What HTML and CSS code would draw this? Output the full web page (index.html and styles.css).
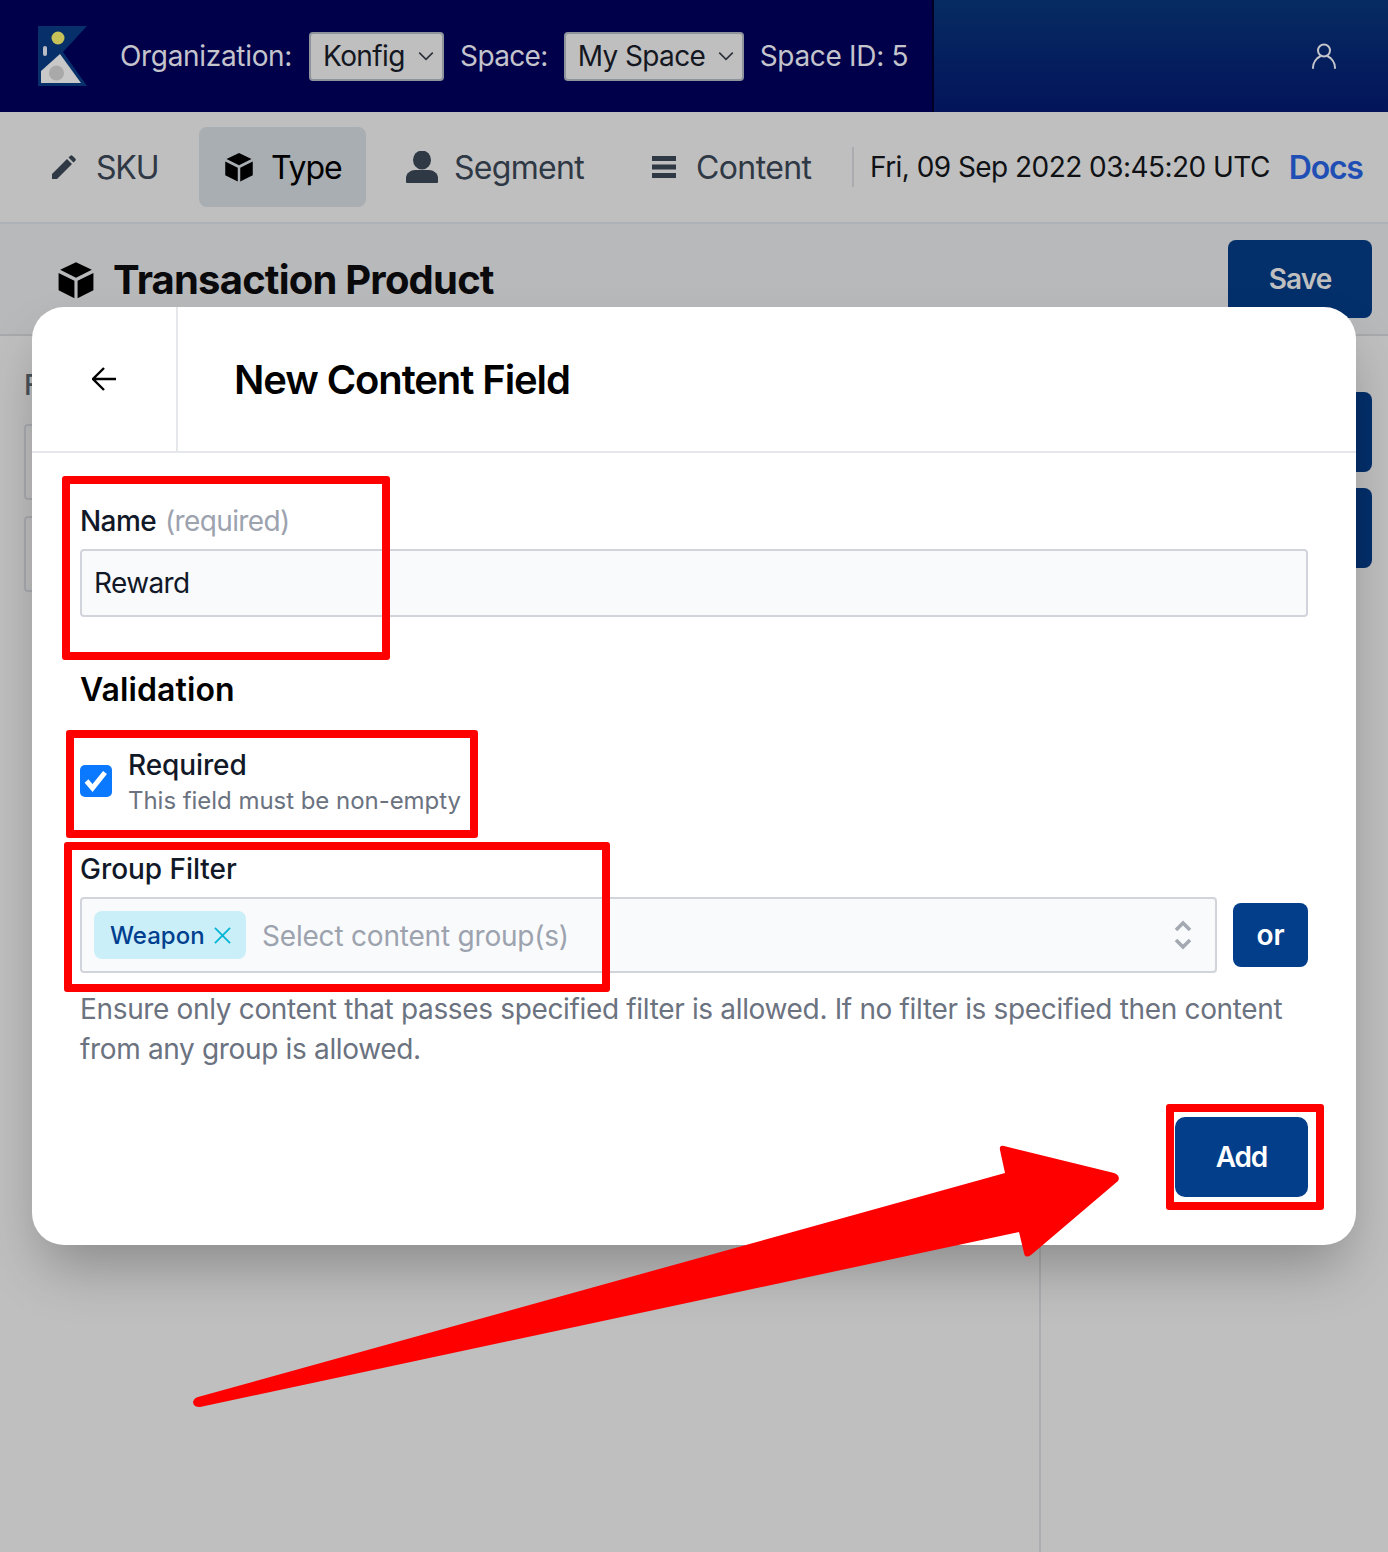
FILE: index.html
```html
<!DOCTYPE html>
<html lang="en">
<head>
<meta charset="utf-8">
<title>New Content Field</title>
<link rel="stylesheet" href="styles.css">
</head>
<body>
<div class="page">
  <header class="topbar">
    <div class="topbar-left">
      <svg class="logo" viewBox="0 0 50 60" aria-hidden="true">
        <polygon points="0,0 49,0 25,26 49,60 0,60" fill="#07306b"/>
        <circle cx="20" cy="12" r="6.5" fill="#c6c158"/>
        <rect x="5" y="20" width="4" height="10" rx="2" fill="#b9bcc4"/>
        <polygon points="22,28 43,57 3,57 3,45" fill="#c8c8c8"/>
        <circle cx="18.500" cy="47" r="7.500" fill="#a9a9a9"/>
      </svg>
      <span class="top-label org-label">Organization:</span>
      <div class="top-select org-select"><span>Konfig</span><svg class="caret" viewBox="0 0 16 16"><path d="M2 5l6 6 6-6"/></svg></div>
      <span class="top-label space-label">Space:</span>
      <div class="top-select space-select"><span>My Space</span><svg class="caret" viewBox="0 0 16 16"><path d="M2 5l6 6 6-6"/></svg></div>
      <span class="top-label">Space ID: 5</span>
    </div>
    <div class="topbar-right">
      <svg class="user-icon" viewBox="0 0 24 26"><circle cx="12" cy="7.500" r="6"/><path d="M1 25c0-6 4-10 7-11.500M23 25c0-6-4-10-7-11.500"/></svg>
    </div>
  </header>

  <nav class="nav">
    <a class="nav-item nav-sku">
      <svg class="nav-icon" viewBox="0 0 24 24"><path d="M0 24v-5L15 4l5 5L5 24zM16.500 2.500l1.800-1.800a1.500 1.500 0 0 1 2.100 0l2.900 2.900a1.500 1.500 0 0 1 0 2.100L21.500 7.500z"/></svg>
      <span>SKU</span>
    </a>
    <a class="nav-item nav-active">
      <svg class="nav-icon cube" viewBox="0 0 24 24"><path d="M12 .8l10 4.700-10 5-10-5zM1 7.500l10 5V23.500L1 18.500zM23 7.500l-10 5V23.500l10-5z"/></svg>
      <span>Type</span>
    </a>
    <a class="nav-item nav-segment">
      <svg class="nav-icon person" viewBox="0 0 32 32"><ellipse cx="16" cy="9" rx="9" ry="9.500"/><path d="M0 31v-4c0-5 5-8 9-8h14c4 0 9 3 9 8v4a1 1 0 0 1-1 1H1a1 1 0 0 1-1-1z"/></svg>
      <span>Segment</span>
    </a>
    <a class="nav-item nav-content">
      <svg class="nav-icon bars" viewBox="0 0 24 22"><path d="M0 0h24v5H0zM0 8.500h24v5H0zM0 17h24v5H0z"/></svg>
      <span>Content</span>
    </a>
    <span class="nav-divider"></span>
    <span class="nav-date">Fri, 09 Sep 2022 03:45:20 UTC</span>
    <a class="nav-docs">Docs</a>
  </nav>

  <section class="titlebar">
    <svg class="title-icon" viewBox="0 0 24 24"><path d="M12 .8l10 4.700-10 5-10-5zM1 7.500l10 5V23.500L1 18.500zM23 7.500l-10 5V23.500l10-5z"/></svg>
    <h1 class="page-title">Transaction Product</h1>
    <button class="btn-save">Save</button>
  </section>

  <main class="content">
    <div class="pane-left">
      <div class="pane-label">Fields</div>
      <div class="ghost-row"></div>
      <div class="ghost-row"></div>
    </div>
    <div class="pane-right">
      <div class="ghost-btn"></div>
      <div class="ghost-btn"></div>
    </div>
  </main>

  <div class="modal">
    <div class="modal-head">
      <div class="modal-back">
        <svg class="back-icon" viewBox="0 0 24 24"><path d="M12 1L1 12l11 11M1 12h23"/></svg>
      </div>
      <h2 class="modal-title">New Content Field</h2>
    </div>
    <div class="modal-body">
      <label class="field-label name-label">Name <span class="muted">(required)</span></label>
      <div class="input">Reward</div>

      <h3 class="section-title">Validation</h3>

      <div class="check-row">
        <span class="checkbox"><svg viewBox="0 0 32 32"><path d="M6.500 16l6 7L25 7.500"/></svg></span>
        <div>
          <div class="check-title">Required</div>
          <div class="check-desc">This field must be non-empty</div>
        </div>
      </div>

      <label class="field-label group-label">Group Filter</label>
      <div class="select-row">
        <div class="multiselect">
          <span class="tag">Weapon<svg class="tag-x" viewBox="0 0 18 18"><path d="M1 1l16 16M17 1L1 17"/></svg></span>
          <span class="placeholder">Select content group(s)</span>
          <svg class="updown" viewBox="0 0 18 32"><path d="M2 11l7-7 7 7M2 21l7 7 7-7"/></svg>
        </div>
        <button class="btn-or">or</button>
      </div>
      <p class="help">Ensure only content that passes specified filter is allowed. If no filter is specified then content from any group is allowed.</p>
      <div class="modal-actions">
        <button class="btn-add">Add</button>
      </div>
    </div>
  </div>

  <div class="mark mark-name"></div>
  <div class="mark mark-required"></div>
  <div class="mark mark-group"></div>
  <div class="mark mark-add"></div>
  <svg class="arrow" viewBox="0 0 1388 1552" aria-hidden="true">
    <path d="M198 1397L1005 1173L1000 1150Q999 1145 1004 1146L1114 1173Q1121 1176 1118 1181L1031 1255Q1025 1259 1024 1253L1019 1232L200 1407Q193 1407 193 1402Q194 1398 198 1397Z"/>
  </svg>
</div>
</body>
</html>
```
FILE: styles.css
```css
* { box-sizing: border-box; }
html, body { margin: 0; padding: 0; }
body { font-family: Inter, "Liberation Sans", sans-serif; background: #bfbfbf; color: #000; }
.page { position: relative; width: 1388px; height: 1552px; overflow: hidden; display: flex; flex-direction: column; background: #bfbfbf; }

.topbar { display: flex; height: 112px; flex: none; background: #00004a; }
.topbar-left { width: 934px; display: flex; align-items: center; padding-left: 38px; border-right: 2px solid #000024; flex: none; }
.logo { width: 50px; height: 60px; margin-right: 32px; margin-top: -1px; flex: none; }
.top-label { font-size: 28px; letter-spacing: -0.32px; color: #c4c4cc; white-space: nowrap; }
.space-label { letter-spacing: -0.65px; }
.top-select { display: flex; align-items: center; justify-content: space-between; height: 49px; margin: 0 16px; padding: 0 7px 0 12px; background: #bfbfbf; border: 2px solid #8f949c; border-radius: 4px; color: #14171f; font-size: 28px; letter-spacing: -0.6px; }
.org-select { width: 135px; margin-left: 17px; }
.space-select { width: 180px; }
.caret { width: 18px; height: 18px; fill: none; stroke: #2b2f38; stroke-width: 1.400; }
.topbar-right { flex: 1; display: flex; align-items: center; justify-content: flex-end; padding-right: 52px; background: linear-gradient(180deg, #062b62 0%, #03145a 100%); }
.user-icon { width: 24px; height: 26px; fill: none; stroke: #c4c6cc; stroke-width: 2; stroke-linecap: round; }

.nav { display: flex; align-items: center; height: 112px; flex: none; padding-left: 16px; border-bottom: 2px solid #aeb1b5; }
.nav-item { display: flex; align-items: center; height: 80px; font-size: 32px; letter-spacing: -0.6px; color: #2f3845; }
.nav-sku { width: 183px; padding-left: 36px; gap: 20px; letter-spacing: -1.2px; }
.nav-active { width: 167px; padding-left: 25px; gap: 17px; background: #a9aeb2; border-radius: 8px; color: #000; letter-spacing: -1.1px; }
.nav-segment { width: 240px; padding-left: 40px; gap: 16px; letter-spacing: -0.7px; }
.nav-content { width: 246px; padding-left: 46px; gap: 20px; }
.nav-icon { width: 24px; height: 24px; fill: #2f3845; flex: none; }
.cube { width: 30px; height: 30px; fill: #000; }
.person { width: 32px; height: 32px; }
.bars { width: 24px; height: 22px; }
.nav-divider { width: 2px; height: 40px; background: #a9abae; flex: none; }
.nav-date { font-size: 28px; letter-spacing: -0.55px; color: #0f1115; margin-left: 16px; white-space: nowrap; }
.nav-docs { font-size: 32px; font-weight: 600; letter-spacing: -1.25px; color: #1f4fb5; margin-left: 19px; }

.titlebar { display: flex; align-items: center; height: 112px; flex: none; padding: 0 16px 0 57px; background: #b8b9bb; border-bottom: 2px solid #a8a9ac; }
.title-icon { width: 38px; height: 38px; fill: #000; flex: none; margin-right: 18px; margin-top: 2px; }
.page-title { margin: 2px 0 0; font-size: 40px; line-height: 48px; font-weight: 700; letter-spacing: -0.8px; color: #0a0a0c; white-space: nowrap; flex: 1; }
.btn-save { width: 144px; height: 78px; border: 0; border-radius: 8px; background: #032f6b; color: #bfbfbf; font: 600 28px Inter, sans-serif; letter-spacing: -0.9px; }

.content { flex: 1; display: flex; }
.pane-left { width: 1039px; padding: 32px 24px 0; flex: none; }
.pane-label { font-size: 28px; line-height: 34px; font-weight: 500; color: #4a5058; margin-bottom: 22px; }
.ghost-row { height: 76px; border: 2px solid #a9abb0; border-radius: 4px; margin-bottom: 16px; }
.pane-right { flex: 1; padding: 56px 16px 0; border-left: 2px solid #abadb0; }
.ghost-btn { height: 80px; background: #032f6b; border-radius: 8px; margin-bottom: 16px; }

.modal { position: absolute; left: 32px; top: 307px; width: 1324px; height: 938px; background: #fff; border-radius: 32px; box-shadow: 0 30px 56px -10px rgba(0, 0, 0, 0.28); }
.modal-head { display: flex; height: 146px; border-bottom: 2px solid #e5e7eb; }
.modal-back { width: 146px; display: flex; align-items: center; justify-content: center; border-right: 2px solid #e5e7eb; }
.back-icon { width: 24px; height: 24px; fill: none; stroke: #000; stroke-width: 2.400; }
.modal-title { margin: 0 0 0 56px; font-size: 40px; line-height: 146px; font-weight: 600; letter-spacing: -1.1px; color: #000; }
.modal-body { padding: 48px; }
.field-label { display: block; height: 40px; font-size: 28px; line-height: 40px; font-weight: 500; letter-spacing: -0.05px; color: #111827; }
.name-label { letter-spacing: -0.6px; }
.muted { font-weight: 400; color: #9ca3af; margin-left: 2px; }
.input { height: 68px; margin-top: 8px; padding: 0 12px; display: flex; align-items: center; background: #f9fafb; border: 2px solid #d1d5db; border-radius: 4px; font-size: 28px; letter-spacing: -0.65px; color: #111827; }
.section-title { margin: 52px 0 0; height: 40px; padding-top: 1px; font-size: 32px; line-height: 40px; font-weight: 600; letter-spacing: 0.1px; color: #000; }
.check-row { display: flex; align-items: center; gap: 16px; margin-top: 36px; }
.checkbox { width: 32px; height: 32px; border-radius: 5px; background: #0a78ff; display: block; flex: none; }
.checkbox svg { display: block; width: 32px; height: 32px; fill: none; stroke: #fff; stroke-width: 5; }
.check-title { font-size: 28px; line-height: 40px; font-weight: 500; letter-spacing: -0.1px; color: #111827; }
.check-desc { font-size: 24px; line-height: 32px; letter-spacing: -0.04px; color: #6b7280; }
.group-label { margin-top: 32px; }
.select-row { display: flex; align-items: center; gap: 16px; margin-top: 8px; }
.multiselect { flex: 1; height: 76px; display: flex; align-items: center; padding: 0 23px 0 12px; background: #f9fafb; border: 2px solid #d1d5db; border-radius: 4px; }
.tag { display: flex; align-items: center; gap: 9px; width: 152px; height: 48px; padding: 1px 14px 0 16px; background: #cbeff8; border-radius: 8px; font-size: 24px; font-weight: 500; color: #003f8f; }
.tag-x { width: 17px; height: 17px; fill: none; stroke: #06b6d4; stroke-width: 2; }
.placeholder { flex: 1; margin-left: 16px; padding-top: 1px; font-size: 28px; letter-spacing: -0.2px; color: #9ca3af; }
.updown { width: 18px; height: 32px; fill: none; stroke: #a3a8b1; stroke-width: 3.500; }
.btn-or { width: 75px; height: 64px; border: 0; border-radius: 8px; background: #033e8a; color: #fff; font: 600 28px Inter, sans-serif; }
.help { margin: 16px 0 0; font-size: 28px; line-height: 40px; letter-spacing: -0.34px; color: #6b7280; }
.modal-actions { display: flex; justify-content: flex-end; margin-top: 48px; }
.btn-add { width: 133px; height: 80px; border: 0; border-radius: 10px; background: #033e8a; color: #fff; font: 600 28px Inter, sans-serif; letter-spacing: -1.2px; }

.mark { position: absolute; border: 8px solid #ff0000; border-radius: 3px; }
.mark-name { left: 62px; top: 476px; width: 328px; height: 184px; }
.mark-required { left: 66px; top: 730px; width: 412px; height: 108px; }
.mark-group { left: 64px; top: 842px; width: 546px; height: 150px; }
.mark-add { left: 1166px; top: 1104px; width: 158px; height: 106px; }
.arrow { position: absolute; left: 0; top: 0; width: 1388px; height: 1552px; fill: #ff0000; pointer-events: none; }
```
